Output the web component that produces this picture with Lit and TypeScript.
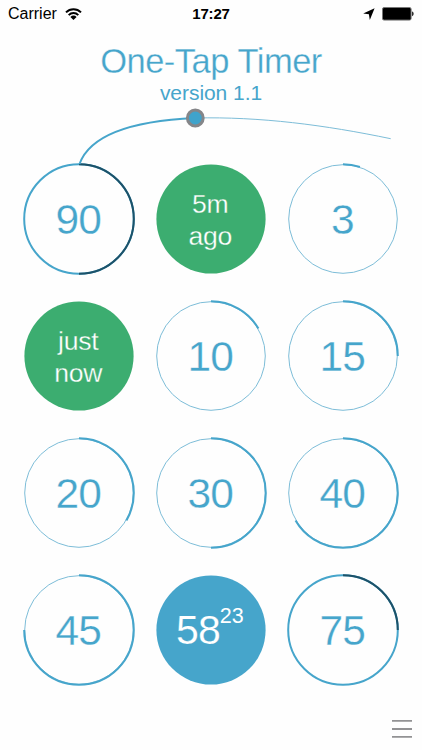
import { LitElement, html, svg, css, nothing } from "lit";
import { customElement, property } from "lit/decorators.js";

const BLUE = "#46a5cb";

interface Dial {
  kind: "minutes" | "done" | "running";
  value?: number;
  lines?: string[];
  seconds?: string;
}

const DIALS: Dial[] = [
  { kind: "minutes", value: 90 },
  { kind: "done", lines: ["5m", "ago"] },
  { kind: "minutes", value: 3 },
  { kind: "done", lines: ["just", "now"] },
  { kind: "minutes", value: 10 },
  { kind: "minutes", value: 15 },
  { kind: "minutes", value: 20 },
  { kind: "minutes", value: 30 },
  { kind: "minutes", value: 40 },
  { kind: "minutes", value: 45 },
  { kind: "running", value: 58, seconds: "23" },
  { kind: "minutes", value: 75 },
];

function arc(minutes: number, r: number): string {
  const a = (minutes / 60) * Math.PI * 2;
  const x = (r * Math.sin(a)).toFixed(2);
  const y = (-r * Math.cos(a)).toFixed(2);
  return `M0 ${-r}A${r} ${r} 0 ${minutes > 30 ? 1 : 0} 1 ${x} ${y}`;
}

@customElement("timer-dial")
export class TimerDial extends LitElement {
  @property({ attribute: false }) dial!: Dial;

  static styles = css`
    :host { display: block; width: 112px; height: 112px; }
    svg { display: block; overflow: visible; }
    text { font-family: "Liberation Sans", Arial, sans-serif; text-anchor: middle; }
    .thin { fill: none; stroke: #7dbdd8; stroke-width: 1; }
    .thick { fill: none; stroke: #46a5cb; stroke-width: 2; }
    .over { fill: none; stroke: #1d5269; stroke-width: 2; }
    .num { font-size: 42.5px; letter-spacing: -0.8px; fill: #46a5cb; stroke: #fff; stroke-width: 0.3px; }
    .done { fill: #3cad70; }
    .running { fill: #46a5cb; }
    .word { font-size: 26.6px; letter-spacing: -0.3px; fill: #fff; stroke: #3cad70; stroke-width: 0.3px; }
    .left { font-size: 41px; fill: #fff; stroke: #46a5cb; stroke-width: 0.2px; text-anchor: start; }
    .sec { font-size: 21.5px; fill: #fff; text-anchor: start; }
  `;

  private face() {
    const { kind, value = 0, lines = [], seconds } = this.dial;
    if (kind === "done") {
      return svg`
        <circle class="done" r="54.6"></circle>
        <text class="word" x="-0.8" y="-6">${lines[0]}</text>
        <text class="word" x="-0.8" y="25.8">${lines[1]}</text>`;
    }
    if (kind === "running") {
      return svg`
        <circle class="running" r="54.6"></circle>
        <text class="left" x="-35" y="14" textLength="44.8">${value}</text>
        <text class="sec" x="8.8" y="-7.3">${seconds}</text>`;
    }
    return svg`
      ${value > 60
        ? svg`<circle class="thick" r="54.8"></circle>
              <path class="over" d=${arc(value - 60, 54.8)}></path>`
        : svg`<circle class="thin" r="54.3"></circle>
              <path class="thick" d=${arc(value, 54.8)}></path>`}
      <text class="num" x="-0.7" y="15.4">${value}</text>`;
  }

  render() {
    return this.dial
      ? html`<svg width="112" height="112" viewBox="-56 -56 112 112">${this.face()}</svg>`
      : nothing;
  }
}

@customElement("status-bar")
export class StatusBar extends LitElement {
  static styles = css`
    :host {
      display: grid; grid-template-columns: 1fr auto 1fr; align-items: center;
      box-sizing: border-box; height: 28px; padding: 0 8px; color: #000;
      font-size: 16px; line-height: 28px;
    }
    .side { display: flex; align-items: center; }
    .wifi { margin-left: 8px; margin-top: -1px; }
    .time { font-size: 15px; font-weight: 700; letter-spacing: -0.15px; }
    .right { justify-content: flex-end; gap: 7px; }
    svg { display: block; }
  `;

  render() {
    return html`
      <div class="side">
        <span>Carrier</span>
        <svg class="wifi" width="17" height="12" viewBox="0 0 17 12">
          <g fill="none" stroke="#000" stroke-width="2">
            <path d="M1 4.4A10.6 10.6 0 0 1 16 4.4"></path>
            <path d="M3.7 7.1A6.8 6.8 0 0 1 13.3 7.1"></path>
          </g>
          <path d="M8.5 12L5.4 8.9A4.4 4.4 0 0 1 11.6 8.9Z"></path>
        </svg>
      </div>
      <span class="time">17:27</span>
      <div class="side right">
        <svg width="12" height="12" viewBox="0 0 12 12"><path d="M11.6 0.2L6.8 12L5.9 6.2L0.2 5.6Z"></path></svg>
        <svg width="32" height="14" viewBox="0 0 32 14">
          <rect x="0.5" y="0.5" width="28.6" height="12.6" rx="1.6" fill="#000" stroke="#777"></rect>
          <path d="M30.2 4.6C32 5 32 8.8 30.2 9.2Z"></path>
        </svg>
      </div>`;
  }
}

@customElement("app-root")
export class AppRoot extends LitElement {
  static styles = css`
    :host {
      display: flex; flex-direction: column; position: relative;
      height: 750px; background: #fefefe; overflow: hidden;
      font-family: "Liberation Sans", Arial, sans-serif;
    }
    .header { text-align: center; color: #46a5cb; height: 122px; flex: none; }
    h1 {
      margin: 13px 0 0; font-weight: 400; font-size: 34.5px; line-height: 40px;
      letter-spacing: -0.5px; -webkit-text-stroke: 0.3px #fefefe;
    }
    .version { font-size: 21px; line-height: 24px; letter-spacing: -0.05px; }
    .curve { position: absolute; left: 0; top: 100px; }
    .grid {
      display: grid; grid-template-columns: repeat(3, 132.3px);
      grid-auto-rows: 137px; place-items: center; justify-content: center;
    }
    .footer { display: flex; justify-content: flex-end; padding: 21px 10px 0 0; }
    .menu { display: block; }
  `;

  render() {
    return html`
      <status-bar></status-bar>
      <div class="header">
        <h1>One-Tap Timer</h1>
        <div class="version">version 1.1</div>
      </div>
      <div class="grid">
        ${DIALS.map((d) => html`<timer-dial .dial=${d}></timer-dial>`)}
      </div>
      <div class="footer">
        <svg class="menu" width="20" height="20" viewBox="0 0 20 20">
          <path d="M0 1.9H20M0 10H20M0 17.9H20" stroke="#929294" stroke-width="1.9"></path>
        </svg>
      </div>
      <svg class="curve" width="422" height="70" viewBox="0 100 422 70" fill="none">
        <path d="M195 118C260 116.5 325 125 390.7 138.7" stroke="#7dbdd8"></path>
        <path d="M79.5 164C90 135 130 121 195 118" stroke=${BLUE} stroke-width="1.9"></path>
        <circle cx="195.3" cy="118" r="7.9" fill="#3fa3cb" stroke="#858689" stroke-width="3"></circle>
      </svg>`;
  }
}
